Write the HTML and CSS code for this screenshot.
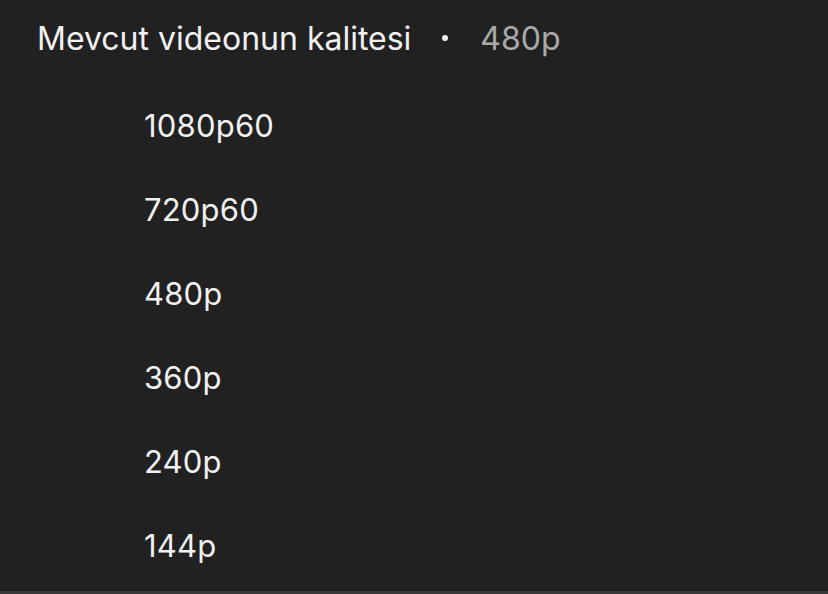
FILE: index.html
```html
<!DOCTYPE html>
<html lang="tr">
<head>
<meta charset="utf-8">
<link rel="stylesheet" href="styles.css">
</head>
<body>
<div class="sheet">
  <div class="header">
    <span class="title">Mevcut videonun kalitesi</span>
    <span class="dot"></span>
    <span class="current">480p</span>
  </div>
  <ul class="options">
    <li>1080p60</li>
    <li>720p60</li>
    <li>480p</li>
    <li>360p</li>
    <li>240p</li>
    <li>144p</li>
  </ul>
</div>
</body>
</html>
```
FILE: styles.css
```css
html, body {
  margin: 0;
  padding: 0;
  background: #212121;
}
body {
  width: 828px;
  height: 594px;
  overflow: hidden;
  font-family: Inter, Roboto, "Noto Sans", sans-serif;
  color: #f1f1f1;
}
.sheet {
  height: 591px;
  border-bottom: 3px solid #3a3a3a;
  box-sizing: content-box;
}
.header {
  display: flex;
  align-items: center;
  padding: 18px 0 0 37px;
  height: 40px;
  font-size: 32px;
}
.title {
  color: #f1f1f1;
}
.dot {
  width: 6px;
  height: 6px;
  border-radius: 50%;
  background: #f1f1f1;
  margin: 0 32px 0 31px;
}
.current {
  color: #aaaaaa;
}
.options {
  list-style: none;
  margin: 0;
  padding: 0 0 0 144px;
}
.options li {
  height: 84px;
  line-height: 84px;
  font-size: 31px;
  letter-spacing: 0.2px;
  color: #f1f1f1;
}
.options li:first-child {
  margin-top: 26px;
}
```
